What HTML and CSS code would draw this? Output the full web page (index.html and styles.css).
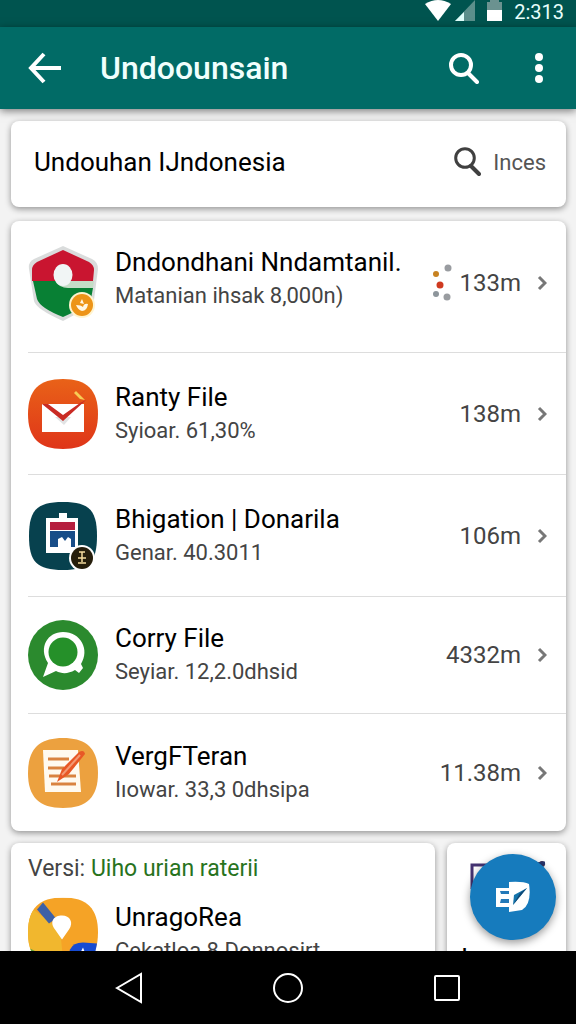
FILE: index.html
```
<!DOCTYPE html>
<html lang="id">
<head>
    <meta charset="UTF-8">
    <meta name="viewport" content="width=device-width, initial-scale=1.0">
    <title>Undoounsain</title>
    <link rel="stylesheet" href="styles.css">
</head>
<body>
    <div class="status-bar">
        <svg width="26" height="21" viewBox="0 0 26 21"><path d="M0 4Q13-4 26 4L13 21Z" fill="#fff"/></svg>
        <svg width="20" height="21" viewBox="0 0 20 21"><path d="M0 21L20 0V21Z" fill="#5b8f8b"/><path d="M0 21L9 12V21Z" fill="#e0fffb"/></svg>
        <svg class="battery" width="15" height="21" viewBox="0 0 15 21"><path d="M0 2H3V0H12V2H15V11H0Z" fill="#6b9290"/><path d="M0 10H15V21H0Z" fill="#fff"/></svg>
        <span class="clock">2:313</span>
    </div>

    <header class="toolbar">
        <button class="icon-btn" aria-label="Back">
            <svg width="34" height="32" viewBox="0 0 34 32" fill="none" stroke="#fff" stroke-width="4"><path d="M16 2L3 16L16 30M3 16H33"/></svg>
        </button>
        <h1>Undoounsain</h1>
        <button class="icon-btn" aria-label="Search">
            <svg width="30" height="31" viewBox="0 0 30 31" fill="none" stroke="#fff"><circle cx="12" cy="12" r="10" stroke-width="4"/><path d="M19 20L28 29" stroke-width="4" stroke-linecap="round"/></svg>
        </button>
        <button class="icon-btn more-btn" aria-label="More">
            <svg width="8" height="30" viewBox="0 0 8 30" fill="#fff"><circle cx="4" cy="4" r="4"/><circle cx="4" cy="15" r="4"/><circle cx="4" cy="26" r="4"/></svg>
        </button>
    </header>

    <main class="content">
        <section class="card search-card">
            <h2>Undouhan IJndonesia</h2>
            <button class="search-btn">
                <svg width="27" height="30" viewBox="0 0 27 30" fill="none" stroke="#404040"><circle cx="11" cy="11" r="9.3" stroke-width="3"/><path d="M17 19L25 27" stroke-width="4" stroke-linecap="round"/></svg>
                Inces
            </button>
        </section>

        <ul class="card list">
            <li class="row row-first">
                <svg class="app-icon" viewBox="0 0 70 76">
                    <path d="M35 1L64 14Q70 17 70 24L66 55Q64 61 35 76Q8 64 6 56L1 24Q0 17 6 14Z" fill="#dadcdc"/>
                    <path d="M35 5L61 17Q66 20 66 25L65 36H4L4 25Q4 20 9 17Z" fill="#c91530"/>
                    <path d="M5 36H37L43 43H65L63 54Q60 61 35 72Q12 63 9 54Z" fill="#088034"/>
                    <path d="M28 36H66L65 43H40Q31 43 28 36Z" fill="#c5ddc7"/>
                    <ellipse cx="35" cy="30" rx="9.5" ry="11" fill="#f1f5f5"/>
                    <circle cx="54" cy="60" r="13" fill="#fff4cf"/><circle cx="54" cy="60" r="11" fill="#ed9418"/>
                    <path d="M48 60Q53 60 55 62Q56 58 60 59Q59 66 54 66Q50 65 48 60ZM52 58L54 54L56 59Z" fill="#fff7e5"/>
                </svg>
                <div class="row-text"><h3>Dndondhani Nndamtanil.</h3><p>Matanian ihsak 8,000n)</p></div>
                <svg class="dots" width="20" height="38" viewBox="0 0 20 38"><circle cx="4" cy="10" r="3" fill="#c78221"/><circle cx="16" cy="4" r="3.5" fill="#999ca0"/><circle cx="8" cy="21" r="3.5" fill="#cf3a20"/><circle cx="4" cy="30" r="3" fill="#8d959b"/><circle cx="15" cy="33" r="3.5" fill="#999ca0"/></svg>
                <span class="meta">133m</span>
                <svg class="chevron" viewBox="0 0 10 16"><path d="M2 2L8 8L2 14"/></svg>
            </li>
            <li class="row">
                <svg class="app-icon" viewBox="0 0 70 70">
                    <defs><linearGradient id="mail" x2="0" y2="1"><stop stop-color="#e96218"/><stop offset="1" stop-color="#df3519"/></linearGradient></defs>
                    <path d="M35 0C59 0 70 11 70 35S59 70 35 70S0 59 0 35S11 0 35 0Z" fill="url(#mail)"/>
                    <path d="M14 25H56V53H14Z" fill="#fff"/><path d="M27 38H43L36 46Z" fill="#e1e3e4"/>
                    <path d="M14 25L20 25L35 36L52 24L58 21L35 42Z" fill="#c92b24"/>
                    <path d="M48 12L57 21L52 20L46 14Z" fill="#f7cc54"/>
                </svg>
                <div class="row-text"><h3>Ranty File</h3><p>Syioar. 61,30%</p></div>
                <span class="meta">138m</span>
                <svg class="chevron" viewBox="0 0 10 16"><path d="M2 2L8 8L2 14"/></svg>
            </li>
            <li class="row">
                <svg class="app-icon" viewBox="0 0 70 70">
                    <path d="M35 1C61 1 69 9 69 35S61 69 35 69S1 61 1 35S9 1 35 1Z" fill="#07414e"/>
                    <path d="M18 17H31V12H39V17H50V52H18Z" fill="#fff"/>
                    <path d="M22 21H47V29H22Z" fill="#b51f3f"/><path d="M22 30H47V46H43V38L40 36L37 40L34 36L30 38V46H22Z" fill="#184d88"/>
                    <circle cx="54" cy="57" r="13" fill="#fff"/><circle cx="54" cy="57" r="11" fill="#261e0b"/>
                    <path d="M51 51H57M54 51V61M50 57H58M50 62H58" fill="none" stroke="#f5db9d" stroke-width="1.5"/>
                </svg>
                <div class="row-text"><h3>Bhigation | Donarila</h3><p>Genar. 40.3011</p></div>
                <span class="meta">106m</span>
                <svg class="chevron" viewBox="0 0 10 16"><path d="M2 2L8 8L2 14"/></svg>
            </li>
            <li class="row row-compact">
                <svg class="app-icon" viewBox="0 0 70 70">
                    <circle cx="35" cy="35" r="35" fill="#2b8a2e"/>
                    <path d="M15 57L20 43C10 27 20 12 35 12C53 12 62 30 53 44L55 48L51 53L47 50C40 54 34 54 28 51Z" fill="#fff"/>
                    <circle cx="35" cy="32" r="14.5" fill="#259029"/>
                </svg>
                <div class="row-text"><h3>Corry File</h3><p>Seyiar. 12,2.0dhsid</p></div>
                <span class="meta">4332m</span>
                <svg class="chevron" viewBox="0 0 10 16"><path d="M2 2L8 8L2 14"/></svg>
            </li>
            <li class="row row-compact">
                <svg class="app-icon" viewBox="0 0 70 70">
                    <path d="M35 0C59 0 70 11 70 35S59 70 35 70S0 59 0 35S11 0 35 0Z" fill="#eca13f"/>
                    <path d="M15 12H50L53 54H17Z" fill="#fffaf0"/>
                    <path d="M20 21H41M20 30H36M21 38H48M23 46H48" stroke="#d98340" stroke-width="3"/>
                    <path d="M29 44L34 31L51 14Q56 11 57 16L41 36Z" fill="#e85826"/><path d="M34 37L52 17" stroke="#f39a75" stroke-width="2"/>
                </svg>
                <div class="row-text"><h3>VergFTeran</h3><p>Iıowar. 33,3 0dhsipa</p></div>
                <span class="meta">11.38m</span>
                <svg class="chevron" viewBox="0 0 10 16"><path d="M2 2L8 8L2 14"/></svg>
            </li>
        </ul>

        <div class="bottom-cards">
            <section class="card version-card">
                <p class="version">Versi: <a href="#">Uiho urian raterii</a></p>
                <div class="version-row">
                    <svg class="app-icon" viewBox="0 0 70 70">
                        <defs><clipPath id="mapClip"><path d="M35 0C59 0 70 11 70 35S59 70 35 70S0 59 0 35S11 0 35 0Z"/></clipPath></defs>
                        <g clip-path="url(#mapClip)">
                            <path d="M0 0H70V70H0Z" fill="#f5a326"/><path d="M0 8L32 32L36 70H0Z" fill="#f1b72e"/>
                            <path d="M9 12L15 5L28 21L21 26Z" fill="#3d60a6"/><path d="M0 50L20 60V70H0Z" fill="#65a63b"/>
                        </g>
                        <path d="M42 52Q45 45 55 45L69 46L66 61L50 68L39 62Z" fill="#164bd2"/><path d="M51 58L55 50L58 58Z" fill="#fff"/>
                        <path d="M34 42L27 32C21 24 26 18 34 18S46 25 41 32Z" fill="#fff"/>
                    </svg>
                    <div class="row-text"><h3>UnragoRea</h3><p>Cekatloa 8 Donnosirt</p></div>
                </div>
            </section>
            <section class="card side-card">
                <svg width="85" height="80" viewBox="0 0 85 80" fill="none"><path d="M3 26V2H26" stroke="#443271" stroke-width="3"/><circle cx="73" cy="1" r="3" fill="#3a2f55"/><path d="M66 1L76 0" stroke="#28356d" stroke-width="3"/></svg>
                <p>I</p>
            </section>
        </div>

        <button class="fab" aria-label="Write">
            <svg width="36" height="32" viewBox="0 0 36 32">
                <path d="M1 7H15V26H1Z" fill="#fff"/><path d="M5 10H15V13H6ZM6 18H15V22H5Z" fill="#2379b8"/>
                <path d="M14 1Q28 0 34 3Q37 23 27 29L14 31Z" fill="#fff"/><path d="M18 24L19 14L32 7Z" fill="#1474ab"/><path d="M18 24L32 7L25 12Z" fill="#104875"/>
            </svg>
        </button>
    </main>

    <nav class="nav-bar">
        <button class="icon-btn" aria-label="Back"><svg width="28" height="32" viewBox="0 0 28 32"><path d="M2 16L26 2V30Z"/></svg></button>
        <button class="icon-btn" aria-label="Home"><svg width="32" height="32" viewBox="0 0 32 32"><circle cx="16" cy="16" r="14"/></svg></button>
        <button class="icon-btn" aria-label="Recents"><svg width="28" height="28" viewBox="0 0 28 28"><rect x="2" y="2" width="24" height="24" rx="1"/></svg></button>
    </nav>
</body>
</html>
```
FILE: styles.css
```
* {
    box-sizing: border-box;
}
body {
    display: flex;
    flex-direction: column;
    height: 100vh;
    margin: 0;
    overflow: hidden;
    background-color: #f3f3f3;
    color: #000;
    font-family: Roboto, sans-serif;
}
h1, h2, h3, p, ul {
    margin: 0;
    padding: 0;
    font-weight: normal;
}
svg {
    display: block;
    flex-shrink: 0;
}
button {
    padding: 0;
    border: none;
    background: none;
    font-family: inherit;
    cursor: pointer;
}
.status-bar {
    display: flex;
    flex-shrink: 0;
    justify-content: flex-end;
    height: 27px;
    padding: 0 12px 0 0;
    background-color: #00544f;
    color: #e8fffc;
}
.status-bar svg {
    margin-right: 4px;
}
.status-bar .battery {
    margin: 0 12px 0 8px;
}
.clock {
    font-size: 20px;
    line-height: 24px;
}
.toolbar {
    position: relative;
    z-index: 1;
    display: flex;
    flex-shrink: 0;
    align-items: center;
    height: 82px;
    padding: 0 33px 0 28px;
    background-color: #016b66;
    box-shadow: 0 2px 8px rgba(0,0,0,0.5);
}
.toolbar h1 {
    flex: 1;
    padding-left: 38px;
    color: #f0fffd;
    font-size: 32px;
    font-weight: 500;
}
.more-btn {
    margin-left: 56px;
}
.content {
    position: relative;
    display: flex;
    flex: 1;
    flex-direction: column;
    min-height: 0;
    padding: 12px 10px 0 11px;
    overflow: hidden;
}
.card {
    flex-shrink: 0;
    border-radius: 8px;
    background-color: #fff;
    box-shadow: 0 2px 6px rgba(0,0,0,0.4);
}
.search-card {
    display: flex;
    align-items: center;
    justify-content: space-between;
    height: 86px;
    padding: 0 20px 4px 23px;
}
.search-card h2 {
    font-size: 26px;
}
.search-btn {
    display: flex;
    align-items: center;
    gap: 12px;
    color: #555;
    font-size: 22px;
}
.list {
    margin: 14px 0 12px;
    list-style: none;
}
.row {
    display: flex;
    align-items: center;
    height: 122px;
    margin-left: 17px;
    padding-right: 19px;
    border-bottom: 1px solid #ddd;
}
.row-first {
    height: 132px;
    padding-bottom: 8px;
}
.row-first .row-text {
    padding-bottom: 8px;
}
.row-compact {
    height: 117px;
}
.row:last-child {
    border-bottom: none;
}
.app-icon {
    width: 70px;
    margin-right: 17px;
}
.row-text {
    flex: 1;
    min-width: 0;
    white-space: nowrap;
}
.row-text h3 {
    font-size: 26px;
    line-height: 34px;
}
.row-text p {
    color: #444;
    font-size: 22px;
    line-height: 34px;
}
.dots {
    margin-right: 7px;
}
.meta {
    color: #444;
    font-size: 24px;
}
.chevron {
    width: 10px;
    margin-left: 16px;
    fill: none;
    stroke: #777;
    stroke-width: 3;
}
.bottom-cards {
    display: flex;
    gap: 12px;
}
.version-card {
    flex: 1;
    height: 140px;
    padding: 10px 17px;
}
.version {
    color: #444;
    font-size: 23px;
    line-height: 32px;
}
.version a {
    color: #28731d;
    text-decoration: none;
}
.version-row {
    display: flex;
    padding-top: 12px;
}
.version-row .row-text {
    padding-top: 3px;
}
.side-card {
    width: 119px;
    height: 140px;
    padding: 20px 12px 0 22px;
}
.side-card svg {
    overflow: visible;
}
.side-card p {
    margin-left: -8px;
    font-size: 26px;
}
.fab {
    position: absolute;
    right: 20px;
    bottom: 11px;
    display: flex;
    align-items: center;
    justify-content: center;
    width: 86px;
    height: 86px;
    border-radius: 50%;
    background-color: #167bbd;
    box-shadow: 0 3px 8px rgba(0,0,0,0.4);
}
.nav-bar {
    display: flex;
    flex-shrink: 0;
    align-items: center;
    justify-content: space-between;
    height: 73px;
    padding: 0 20%;
    background-color: #000;
}
.nav-bar svg {
    fill: none;
    stroke: #fff;
    stroke-width: 2;
}
```
